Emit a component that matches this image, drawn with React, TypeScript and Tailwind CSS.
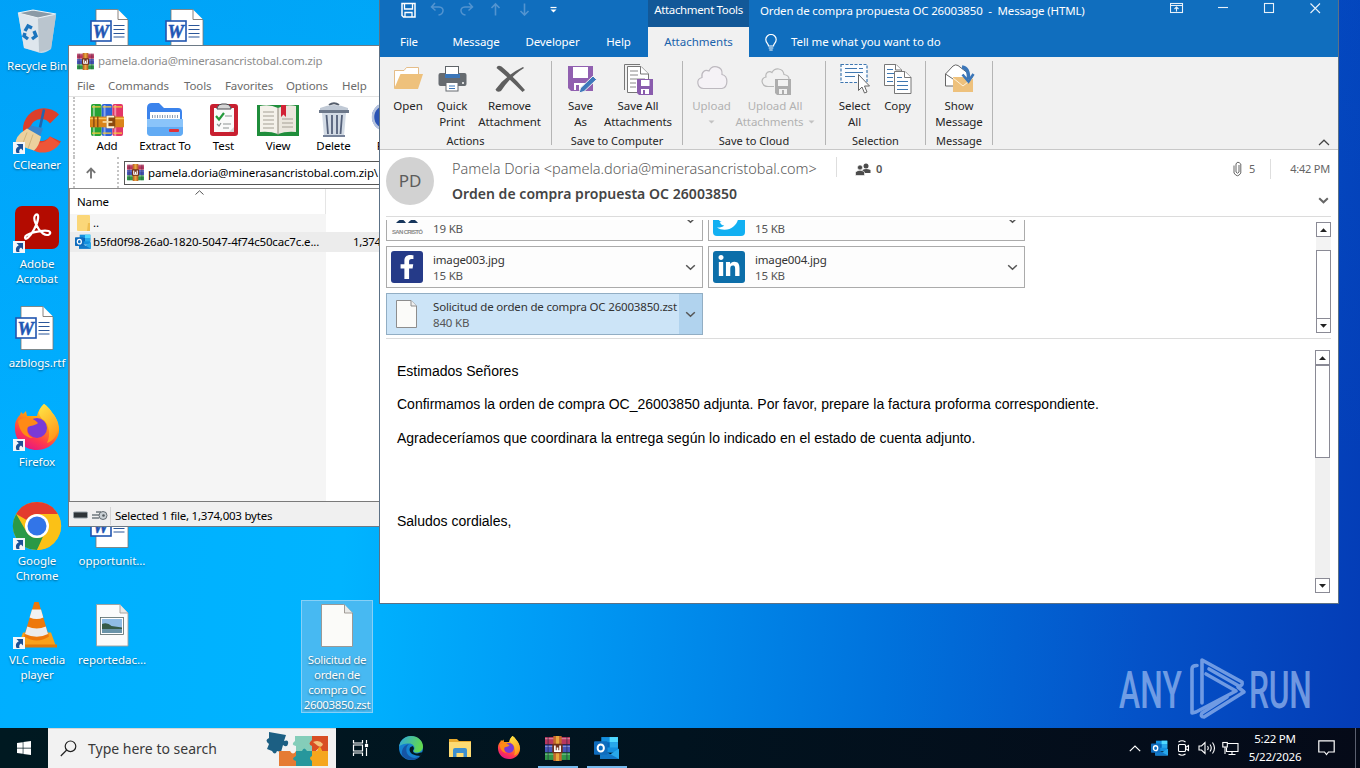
import React from 'react';
import { FaFacebookF, FaLinkedinIn, FaTwitter, FaWindows } from 'react-icons/fa';

/* ---------- Desktop icons ---------- */

function RecycleIcon() {
  return (
    <svg width="48" height="48" viewBox="0 0 48 48">
      <path d="M5 5 L43 7 L38 41 Q30 47 24 44 L11 40 Z" fill="#d5dde3" opacity="0.9" />
      <path d="M24 10 L43 7 L38 41 L26 44 Z" fill="#b9c3cb" opacity="0.9" />
      <path d="M5 5 L20 2 L43 6 L25 10 Z" fill="#8a9aa6" stroke="#eef3f6" strokeWidth="1.2" />
      <path d="M5 5 L25 10 L26 44 L11 40 Z" fill="#e3e9ed" opacity="0.85" />
      <g stroke="#1b74bd" strokeWidth="3.4" fill="none">
        <path d="M12 23 L15 18 L19 20" />
        <path d="M21 23 L23 28 L19 31" />
        <path d="M15 31 L11 28 L12 25" />
      </g>
    </svg>
  );
}

function WordDoc() {
  return (
    <svg width="48" height="48" viewBox="4.500 0 48 48">
      <path d="M12.500 1.500 H34 L44.500 12 V44.500 H12.500 Z" fill="#fff" stroke="#7c756f" strokeWidth="0.8" />
      <path d="M34.500 1.500 V11.500 H44.500" fill="#fff" stroke="#7c756f" strokeWidth="0.9" />
      <path d="M30 17.500 H41 M30 21.500 H41 M30 25.500 H41 M30 29 H41" stroke="#2b579a" strokeWidth="1.1" />
      <rect x="7.500" y="13" width="20" height="20" fill="#fff" stroke="#2155b0" strokeWidth="1.6" />
      <text x="17.300" y="29.500" fontSize="18.500" fontWeight="700" fontStyle="italic" textAnchor="middle" fill="#1f56b4" stroke="#1f56b4" strokeWidth="0.5" fontFamily="Liberation Serif">W</text>
    </svg>
  );
}

function BlankDoc() {
  return (
    <svg width="48" height="48" viewBox="0.500 0 48 48">
      <path d="M9 2.500 H31 L40 11 V44.500 H9 Z" fill="#fbfbf9" stroke="#98928c" strokeWidth="0.9" />
      <path d="M32 2.500 V11 H40" fill="#e9e9e7" stroke="#98928c" strokeWidth="0.9" />
    </svg>
  );
}

function PictureDoc() {
  return (
    <svg width="48" height="48" viewBox="0.500 0 48 48">
      <path d="M9 2.500 H32 L40.500 11 V44 H9 Z" fill="#fbfbfb" stroke="#a29d98" strokeWidth="0.9" />
      <path d="M32.500 2.500 V11 H40.500" fill="#e9e9e7" stroke="#a29d98" strokeWidth="0.9" />
      <rect x="13" y="15.500" width="23" height="17" fill="#fff" stroke="#566" strokeWidth="0.8" />
      <rect x="14.500" y="17" width="20" height="14" fill="#8fbbe4" />
      <path d="M14.500 22 Q20 20 24 24 L34.500 25.500 V27 H14.500 Z" fill="#355a48" />
      <path d="M14.500 27 H34.500 V31 H14.500 Z" fill="#6a93a8" />
    </svg>
  );
}

function CCleanerIcon() {
  return (
    <svg width="48" height="48" viewBox="0 1.500 48 48">
      <path d="M46 9 A21 21 0 1 0 48 36 L37 31 A11 11 0 1 1 37 18 Z" fill="#dc3f2a" />
      <path d="M47 38 A21 21 0 0 1 16 42 L20 36 Q31 40 37 31 Z" fill="#ee5538" />
      <path d="M31 4 L27 22" stroke="#2165ae" strokeWidth="2.600" />
      <path d="M18 20 L30 23 L27 31 L14 24 Z" fill="#3a84cb" />
      <path d="M14 23 L28 31 Q26 41 21 45 L3 39 Q1 31 14 23 Z" fill="#ecd19e" />
      <path d="M14 27 L9 40 M20 29 L15 43" stroke="#d2b47c" strokeWidth="1" />
    </svg>
  );
}

function AcrobatIcon() {
  return (
    <svg width="48" height="48" viewBox="0 2 48 48" className="overflow-visible">
      <rect x="2" y="2" width="44" height="43" rx="7" fill="#b30b00" />
      <path d="M22.500 11 C26.500 8 26 17 21 25.500 C17 33 12 37 12 33.500 C12 29.500 30 25.500 35.500 27 C40 29 35 33 30 29.500 C24 25 19 14 22.500 11 Z" fill="none" stroke="#fff" strokeWidth="2.200" strokeLinejoin="round" />
    </svg>
  );
}

function FirefoxIcon({ size }: { size: number }) {
  return (
    <svg width={size} height={size} viewBox="0 1 48 48">
      <defs>
        <linearGradient id="fx-body" x1="0.8" y1="0" x2="0.3" y2="1">
          <stop offset="0" stopColor="#fff44f" />
          <stop offset="0.4" stopColor="#ff980e" />
          <stop offset="0.75" stopColor="#ff3750" />
          <stop offset="1" stopColor="#e31587" />
        </linearGradient>
        <linearGradient id="fx-tail" x1="0" y1="0" x2="0.4" y2="1">
          <stop offset="0" stopColor="#ffe847" />
          <stop offset="1" stopColor="#ff9a1b" />
        </linearGradient>
      </defs>
      <path d="M31 1 C37 5 39 10 41 12 C46 19 48 28 44 35 C40 43 32 47 24 47 C11 47 1 37 2 23 C2 18 5 14 7 12 L8 9 L10 11 L13 8 L14 13 C18 13 21 13 24 13 C25 8 27 5 31 1 Z" fill="url(#fx-body)" />
      <path d="M31 1 C37 5 39 10 41 12 C46 19 47 28 42 34 C40 37 37 39 34 40 C38 32 36 22 31 17 C27 15 26 11 26 9 C27 5 29 3 31 1 Z" fill="url(#fx-tail)" />
      <circle cx="24" cy="25" r="10" fill="#7a3ad6" />
      <path d="M5 18 C10 13 20 14 25 20 C22 23 18 22 15 24 C13 28 15 33 20 35 C11 35 6 27 5 18 Z" fill="#ff8a16" />
    </svg>
  );
}

function ChromeIcon() {
  return (
    <svg width="48" height="48" viewBox="0 1 48 48" className="overflow-visible">
      <circle cx="24" cy="24" r="24" fill="#fbc116" />
      <path d="M24 0 A24 24 0 0 1 44.800 12 H24 A12 12 0 0 0 13.600 18 L3.200 12 A24 24 0 0 1 24 0 Z" fill="#e33b2e" />
      <path d="M3.200 12 L13.600 30 A12 12 0 0 0 30 34.500 L24 48 A24 24 0 0 1 3.200 12 Z" fill="#2a9946" />
      <path d="M34.400 30 L24 48 A24 24 0 0 0 44.800 12 H24 Z" fill="#fbc116" />
      <circle cx="24" cy="24" r="12" fill="#fff" />
      <circle cx="24" cy="24" r="9.500" fill="#3275e8" />
    </svg>
  );
}

function VlcIcon() {
  return (
    <svg width="48" height="48" viewBox="1 1.500 48 48">
      <path d="M11 32 L39 32 L44 46 H6 Z" fill="#f9a11b" />
      <path d="M6 44 H45 V47 H5 Z" fill="#e07a0a" />
      <path d="M22.500 1 H26.500 L37 36 Q25 44 12 36 Z" fill="#ee780a" />
      <path d="M20 9 H29 L31.300 17 Q25 20 17.600 17 Z" fill="#f2f2f2" />
      <path d="M15.300 26 Q25 30 33.800 26 L36 33.500 Q25 39 13 33.500 Z" fill="#ececec" />
    </svg>
  );
}

function ShortcutArrow() {
  return (
    <svg width="12" height="12" viewBox="0 0 12 12" className="absolute bottom-0.5 left-[13px]">
      <rect width="12" height="12" fill="#f3f6fa" />
      <path d="M3.500 2 H10 V8.500 L8 6.500 Q5.500 7.500 6.500 11 H3.500 Q1.500 6.500 5.800 4.200 Z" fill="#1d5196" />
    </svg>
  );
}

interface DesktopItemProps {
  icon: React.ReactNode;
  lines: string[];
  col: number;
  row: number;
  shortcut?: boolean;
  selected?: boolean;
}

function DesktopItem({ icon, lines, col, row, shortcut, selected }: DesktopItemProps) {
  return (
    <div
      style={{ left: col * 75, top: 6 + row * 99 }}
      className="absolute w-[74px] flex flex-col items-center"
    >
      <div className={`w-[72px] pt-0.5 pb-px ${selected ? 'bg-[#47b9f2] outline outline-1 -outline-offset-1 outline-[#86d0f7]' : ''}`}>
        <div className="relative -mx-px h-[49px] flex justify-center">
          {icon}
          {shortcut && <ShortcutArrow />}
        </div>
        <div className="mt-px flex flex-col items-center text-[11.5px] leading-[15px] tracking-[-0.005em] text-white whitespace-nowrap [text-shadow:0_1px_2px_rgba(0,0,0,0.5)]">
          {lines.map((line) => (
            <div key={line} className={selected ? 'tracking-[-0.03em]' : ''}>{line}</div>
          ))}
        </div>
      </div>
    </div>
  );
}

/* ---------- Shared small icons ---------- */

function RarIcon({ size }: { size: number }) {
  return (
    <svg width={size} height={size} viewBox="0 0 24 24">
      <rect x="0" y="1" width="24" height="7" fill="#b8375f" />
      <rect x="0" y="8.500" width="24" height="7" fill="#4655b8" />
      <rect x="0" y="16" width="24" height="7" fill="#2f9848" />
      <path d="M0 2.500 H24 M0 10 H24 M0 17.500 H24" stroke="#fff" strokeOpacity="0.35" strokeWidth="1" />
      <path d="M3 1 V23 M21 1 V23" stroke="#2a2140" strokeOpacity="0.5" strokeWidth="1.200" />
      <rect x="8" y="0" width="8" height="24" fill="#c4692a" />
      <rect x="10.500" y="0" width="3" height="24" fill="#e6a63d" />
      <rect x="7" y="7.500" width="10" height="9" rx="1" fill="#70301b" />
      <path d="M9.500 9 V14.500 H14.500 V9 M12 11 V14" stroke="#fff" strokeWidth="1.600" fill="none" />
    </svg>
  );
}

function OutlookIcon({ size }: { size: number }) {
  return (
    <svg width={size} height={size} viewBox="0 0 24 24" className="shrink-0">
      <rect x="7" y="1" width="16" height="15" fill="#1490df" />
      <rect x="15" y="1" width="8" height="5" fill="#50d9ff" />
      <rect x="15" y="6" width="8" height="5" fill="#28a8ea" />
      <rect x="7" y="6" width="8" height="5" fill="#0364b8" />
      <path d="M6 12 L15 18 L24 12 V22 H6 Z" fill="#28a8ea" />
      <path d="M6 12 L24 22 H6 Z" fill="#1278c8" />
      <rect x="0" y="5" width="13" height="13" rx="1" fill="#0f6cbd" />
      <ellipse cx="6.500" cy="11.500" rx="3" ry="3.400" fill="none" stroke="#fff" strokeWidth="1.900" />
    </svg>
  );
}

function Chevron({ className = '' }: { className?: string }) {
  return (
    <svg width="11" height="7" viewBox="0 0 11 7" className={className}>
      <path d="M1.200 1.200 L5.500 5.300 L9.800 1.200" fill="none" stroke="currentColor" strokeWidth="1.500" />
    </svg>
  );
}

/* ---------- WinRAR window ---------- */

function AddIcon() {
  return (
    <svg width="34" height="34" viewBox="0 0 35 35">
      <rect x="1" y="1" width="11" height="33" rx="2" fill="#27a335" />
      <rect x="12" y="1" width="11" height="33" rx="2" fill="#2d62d8" />
      <rect x="23" y="1" width="11" height="33" rx="2" fill="#e33668" />
      <path d="M4 2 V34 M15 2 V34 M26 2 V34" stroke="#fff" strokeOpacity="0.45" strokeWidth="2" />
      <path d="M2 4 H11 M13 4 H22 M24 4 H33 M2 31 H11 M13 31 H22 M24 31 H33" stroke="#f5c93c" strokeWidth="1.400" />
      <rect x="0" y="14" width="35" height="11" fill="#d9841a" />
      <path d="M0 16 H35" stroke="#f9c357" strokeWidth="1.500" />
      <path d="M4 14 V25 M8 14 V25" stroke="#8a4a10" strokeWidth="1.500" />
      <path d="M17 13 H26 V26 H17 Z" fill="#8a4a10" />
      <path d="M25 14 H18 V25 H25" fill="none" stroke="#fff2cf" strokeWidth="2" />
      <path d="M13 19.500 H23" stroke="#f7d9a0" strokeWidth="1.800" />
    </svg>
  );
}

function ExtractIcon() {
  return (
    <svg width="38" height="36" viewBox="0 0 38 36">
      <path d="M1 6 Q1 1 6 1 H13 L18 6 H32 Q36 6 36 10 V18 H1 Z" fill="#3b83ec" />
      <path d="M4 10 H34 V20 H4 Z" fill="#fff" />
      <path d="M6 14.500 H32" stroke="#8a9ab0" strokeWidth="3" strokeDasharray="1 1.500" />
      <path d="M1 17 H37 V30 Q37 34 33 34 H5 Q1 34 1 30 Z" fill="#8ac4fa" />
      <path d="M1 25 H37 V30 Q37 34 33 34 H5 Q1 34 1 30 Z" fill="#62abf4" />
      <rect x="23" y="27" width="10" height="3" rx="1" fill="#e0323a" />
    </svg>
  );
}

function TestIcon() {
  return (
    <svg width="30" height="36" viewBox="0 0 30 36">
      <rect x="1" y="2" width="28" height="32" rx="3" fill="#c81f30" />
      <rect x="5" y="6" width="20" height="24" fill="#fafafa" />
      <path d="M20 30 L25 25 V30 Z" fill="#d5d5d5" />
      <path d="M8 6 Q9 2 13 2 H17 Q21 2 22 6 V7 H8 Z" fill="#d6d6d6" stroke="#4a4a4e" strokeWidth="1" />
      <path d="M7 14 L10 17.500 L15 11" fill="none" stroke="#249a3c" strokeWidth="2.200" />
      <path d="M16 14 H23 M8 22 L10 24 L12 21 M14 22 H22 M14 26 H20" fill="none" stroke="#8d9494" strokeWidth="1.200" />
    </svg>
  );
}

function ViewIcon() {
  return (
    <svg width="44" height="36" viewBox="0 0 44 36">
      <path d="M1 3 H43 V34 H1 Z" fill="#1f8d3b" />
      <path d="M4 4 Q14 2 22 6 V32 Q14 29 4 30 Z" fill="#f4f1ea" />
      <path d="M40 4 Q30 2 22 6 V32 Q30 29 40 30 Z" fill="#ebe7de" />
      <path d="M21.500 6 H22.500 V33 H21.500 Z" fill="#8b8578" />
      <path d="M7 10 H18 M7 14 H18 M7 18 H18 M7 22 H18 M7 26 H18 M26 17 H37 M26 21 H37 M26 25 H37" stroke="#a5a095" />
      <path d="M25 3 H30 V15 L27.500 12.500 L25 15 Z" fill="#d22436" />
    </svg>
  );
}

function DeleteIcon() {
  return (
    <svg width="32" height="36" viewBox="0 0 32 36">
      <path d="M11 3 Q16 -0.500 21 3" fill="none" stroke="#555e6c" strokeWidth="2" />
      <path d="M2 6 Q16 0 30 6 V9 H2 Z" fill="#c0c9d5" />
      <path d="M1 8 H31 V11 H1 Z" fill="#6d788a" />
      <path d="M4 11 H28 L26 34 H6 Z" fill="#d2dae4" />
      <path d="M8.500 13 L10 32 M14 13 V32 M19 13 V32 M24 13 L22.500 32" stroke="#55617a" strokeWidth="1.800" />
      <path d="M5 33 H27 V35 H5 Z" fill="#77839a" />
    </svg>
  );
}

function FindIcon() {
  return (
    <svg width="36" height="36" viewBox="0 0 36 36">
      <circle cx="16" cy="15" r="14" fill="#2a53b4" />
      <circle cx="16" cy="15" r="13" fill="none" stroke="#b4c2dd" strokeWidth="2.500" />
    </svg>
  );
}

const rarTools = [
  { label: 'Add', icon: <AddIcon />, width: 'w-[50px]' },
  { label: 'Extract To', icon: <ExtractIcon />, width: 'w-[66px]' },
  { label: 'Test', icon: <TestIcon />, width: 'w-[51px]' },
  { label: 'View', icon: <ViewIcon />, width: 'w-[58px]' },
  { label: 'Delete', icon: <DeleteIcon />, width: 'w-[53px]' },
  { label: 'Find', icon: <FindIcon />, width: 'w-[56px]' },
];

const rarMenu = [
  { label: 'File', width: 'w-[31px]' },
  { label: 'Commands', width: 'w-[76px]' },
  { label: 'Tools', width: 'w-[41px]' },
  { label: 'Favorites', width: 'w-[61px]' },
  { label: 'Options', width: 'w-[56px]' },
  { label: 'Help', width: 'w-[30px]' },
];

function RarWindow() {
  return (
    <div className="absolute left-[68px] top-[45px] w-[352px] h-[482px] bg-white border border-[#6d7a86] flex flex-col overflow-hidden text-[11.5px] tracking-[-0.01em] whitespace-nowrap">
      <div className="h-[30px] flex items-center pl-2 gap-1 text-[#8d8d8d]">
        <RarIcon size={17} />
        <span className="tracking-[-0.013em]">pamela.doria@minerasancristobal.com.zip</span>
      </div>
      <div className="h-5 flex items-center pl-2 text-[#6b6b6b]">
        {rarMenu.map((m) => (
          <span key={m.label} className={m.width}>{m.label}</span>
        ))}
      </div>
      <div className="h-[61px] border-t border-[#e3e3e3] flex pl-1">
        <div className="w-[9px] shrink-0 border-l-2 border-dotted border-[#c4c4c4]" />
        <div className="flex shrink-0 text-black">
          {rarTools.map((t) => (
            <div key={t.label} className={`${t.width} shrink-0 flex flex-col items-center pt-[5px]`}>
              <div className="h-9 flex items-center">{t.icon}</div>
              <span className="leading-4">{t.label}</span>
            </div>
          ))}
        </div>
      </div>
      <div className="h-8 border-b border-[#8c8c8c] flex items-center pl-1">
        <div className="w-[44px] h-full border-l-2 border-dotted border-[#c4c4c4] flex items-center pl-[10px]">
          <svg width="12" height="12" viewBox="0 0 12 12">
            <path d="M6 11.500 V2 M1.800 5.800 L6 1.600 L10.200 5.800" fill="none" stroke="#757575" strokeWidth="1.900" />
          </svg>
        </div>
        <div className="w-[7px] h-full border-l-2 border-dotted border-[#c4c4c4]" />
        <div className="flex-1 h-6 border border-[#555] flex items-center pl-0.5 gap-1 text-black">
          <RarIcon size={17} />
          <span>pamela.doria@minerasancristobal.com.zip\</span>
        </div>
      </div>
      <div className="flex-1 flex relative">
        <div className="w-[257px] flex flex-col bg-[#f5f5f5] border-l border-[#8c8c8c]">
          <div className="h-[25px] pt-px bg-white border-r border-[#e5e5e5] flex items-center pl-[7px] text-black">Name</div>
          <div className="h-[18px] flex items-center pl-[7px] gap-[3px] text-black">
            <svg width="13" height="16" viewBox="0 0 13 16">
              <rect width="13" height="16" rx="1" fill="#fbd779" />
              <path d="M11 8 H13 V16 H10 Z" fill="#efbe51" />
            </svg>
            <span>..</span>
          </div>
          <div className="h-5 w-[330px] bg-[#ececec] flex items-center pl-[5px] text-black">
            <OutlookIcon size={16} />
            <span className="pl-[2px] w-[262px] shrink-0 tracking-[-0.014em]">b5fd0f98-26a0-1820-5047-4f74c50cac7c.e...</span>
            <span className="tracking-[-0.03em]">1,374,003</span>
          </div>
        </div>
        <svg width="9" height="5" viewBox="0 0 9 5" className="absolute left-[126px] top-px">
          <path d="M0.500 4.500 L4.500 0.800 L8.500 4.500" fill="none" stroke="#555" />
        </svg>
      </div>
      <div className="h-[25px] border-t border-[#7a7a7a] bg-[#f0f0f0] flex items-center pl-1 pt-[3px] text-black">
        <svg width="36" height="12" viewBox="0 0 36 12">
          <rect x="0.500" y="2" width="14" height="6" rx="1" fill="#2e3438" stroke="#98a2a8" />
          <path d="M19 5 H27 M19 8 H26 M23 2 H28" stroke="#6f787e" strokeWidth="1.500" />
          <circle cx="30" cy="5.500" r="4" fill="#c9d0d4" stroke="#646d73" />
          <circle cx="30.500" cy="5.500" r="1.300" fill="#545b60" />
        </svg>
        <div className="h-[18px] border-l border-[#d4d4d4] ml-px pl-1 leading-[18px] tracking-[-0.02em]">Selected 1 file, 1,374,003 bytes</div>
      </div>
    </div>
  );
}

/* ---------- Outlook ribbon icons ---------- */

function OpenIcon() {
  return (
    <svg width="32" height="32" viewBox="0 0 32 32">
      <path d="M2.500 26 V8.500 H12 L14.500 5.500 H26.500 V13" fill="#fff" stroke="#e2b57a" strokeWidth="0.900" />
      <path d="M8.500 12 H31 L26 27 H2 Z" fill="#eec17c" />
    </svg>
  );
}

function PrintIcon() {
  return (
    <svg width="32" height="32" viewBox="0 0 32 32">
      <rect x="2.500" y="11" width="28" height="13" rx="2" fill="#666b70" />
      <rect x="9.500" y="4.500" width="13" height="10" fill="#fff" stroke="#5f6468" />
      <path d="M9 12 H24 V16 H9 Z" fill="#3b76b8" />
      <rect x="10" y="20.500" width="12" height="8.500" fill="#fff" stroke="#666b70" />
      <path d="M13 24 H19 M13 26.500 H19" stroke="#3b76b8" />
      <circle cx="27" cy="21" r="1" fill="#fff" />
    </svg>
  );
}

function RemoveIcon() {
  return (
    <svg width="32" height="32" viewBox="0 0 32 32">
      <path d="M2.500 6 Q3.500 2.500 7.500 4.500 Q20 15 31 28 L28.500 30 Q16 17 2.500 6 Z" fill="#5f5f5f" />
      <path d="M30 6 Q17 14 7 29 Q3 31 1.500 27.500 Q12 13 29 5 Z" fill="#5f5f5f" />
    </svg>
  );
}

function SaveAsIcon() {
  return (
    <svg width="32" height="32" viewBox="0 0 32 32">
      <path d="M3 4 H28 V29 H6 L3 26 Z" fill="#9160b0" />
      <path d="M8 5 H23 V16 H8 Z" fill="#fff" />
      <path d="M9 21 H21 V28 H9 Z" fill="#fff" />
      <rect x="11" y="23" width="3" height="5" fill="#9160b0" />
      <path d="M14 31 L15.500 26 L28 14 L31.500 17.500 L19 29.500 Z" fill="#3d78bb" stroke="#f1f1f1" />
    </svg>
  );
}

function SaveAllIcon() {
  return (
    <svg width="32" height="32" viewBox="0 0 32 32">
      <path d="M2.500 28 V2.500 H18" fill="none" stroke="#777" />
      <path d="M5.500 30.500 V4.500 H19 L26.500 12 V30.500 Z" fill="#fff" stroke="#777" />
      <path d="M18.500 4.500 V12 H26.500" fill="#fff" stroke="#777" />
      <path d="M8 9 H16 M8 13 H16 M8 17 H23 M8 21 H14 M8 25 H14" stroke="#888" />
      <path d="M15 17 H31 V33 H17 L15 31 Z" fill="#8a5cad" />
      <rect x="19" y="18" width="8.500" height="6" fill="#fff" />
      <rect x="19" y="27" width="8" height="5" fill="#fff" />
      <rect x="21" y="28" width="2" height="4" fill="#8a5cad" />
    </svg>
  );
}

const cloudPath = 'M7.500 26.500 C1 26 -0.500 17 6 15.500 C5 10 9 7 13 9 C16 2 27 4 26 12.500 C32.500 14 32.500 25 26 26.500 Z';

function CloudIcon() {
  return (
    <svg width="32" height="32" viewBox="0 0 32 32">
      <path d={cloudPath} fill="#f5f2f6" stroke="#bdb9bf" strokeWidth="1.200" />
    </svg>
  );
}

function CloudSaveIcon() {
  return (
    <svg width="32" height="32" viewBox="-1 0 32 32">
      <path d="M14 24.500 H8 C1 24 0 16 6 15 C5 11 9 8 12 10.500 C15 5 23 6 24 12.500 C27 13 29 14.500 29 17" fill="none" stroke="#b8b8b8" strokeWidth="1.200" />
      <path d="M15 17 H31 V33 H17 L15 31 Z" fill="#adadad" />
      <rect x="18" y="18" width="10" height="6" fill="#f1f1f1" />
      <rect x="19" y="27" width="8" height="5" fill="#f1f1f1" />
      <rect x="22" y="28" width="2" height="4" fill="#adadad" />
    </svg>
  );
}

function SelectAllIcon() {
  return (
    <svg width="32" height="32" viewBox="0 0 32 32">
      <rect x="2" y="2.500" width="26" height="18" fill="#fafcff" stroke="#3f77b0" strokeWidth="1.200" strokeDasharray="3 1.500" />
      <path d="M6 6.500 H18 M20 6.500 H24 M6 10.500 H24 M6 14.500 H16" stroke="#3f77b0" strokeWidth="1.200" />
      <path d="M19.500 12.500 V28.500 L23 25 L25.500 31 L28 30 L25.500 24 H30.500 Z" fill="#fff" stroke="#666" />
    </svg>
  );
}

function CopyIcon() {
  return (
    <svg width="32" height="32" viewBox="1 0 32 32">
      <path d="M3.500 23.500 V2.500 H15 L20.500 8 V23.500 Z" fill="#fff" stroke="#777" />
      <path d="M14.500 2.500 V8 H20.500" fill="#fff" stroke="#777" />
      <path d="M6 7.500 H12 M6 11.500 H14 M6 15.500 H12 M6 19.500 H12" stroke="#3f77b0" />
      <path d="M13.500 31.500 V9.500 H24 L30 15.500 V31.500 Z" fill="#fff" stroke="#777" />
      <path d="M23.500 9.500 V15.500 H30" fill="#fff" stroke="#777" />
      <path d="M16 15.500 H21 M16 19.500 H27 M16 23.500 H27 M16 27.500 H27" stroke="#3f77b0" />
    </svg>
  );
}

function ShowMessageIcon() {
  return (
    <svg width="32" height="32" viewBox="0 0 32 32">
      <path d="M2.500 12 L10 4 Q12.500 2 15 3.500 L26 12 V24 H2.500 Z" fill="#fff" stroke="#666" />
      <path d="M2.500 12 L10 17" stroke="#666" />
      <rect x="10" y="15" width="20" height="15" fill="#eec17c" />
      <path d="M10 16 L20 24 L30 16" fill="none" stroke="#fff3dc" />
      <path d="M19 5 Q26 6 25.500 17" fill="none" stroke="#3b76b8" strokeWidth="3.500" />
      <path d="M19.500 12.500 L25.500 19.500 L30.500 12" fill="none" stroke="#3b76b8" strokeWidth="2.600" />
    </svg>
  );
}

interface RibbonButton {
  lines: string[];
  icon: React.ReactNode;
  width: string;
  disabled?: boolean;
  drop?: boolean;
}

const ribbon: { title: string; width: string; buttons: RibbonButton[] }[] = [
  {
    title: 'Actions',
    width: 'w-[172px]',
    buttons: [
      { lines: ['Open'], icon: <OpenIcon />, width: 'w-[44px]' },
      { lines: ['Quick', 'Print'], icon: <PrintIcon />, width: 'w-[44px]' },
      { lines: ['Remove', 'Attachment'], icon: <RemoveIcon />, width: 'w-[71px]' },
    ],
  },
  {
    title: 'Save to Computer',
    width: 'w-[131px]',
    buttons: [
      { lines: ['Save', 'As'], icon: <SaveAsIcon />, width: 'w-[42px]' },
      { lines: ['Save All', 'Attachments'], icon: <SaveAllIcon />, width: 'w-[73px]' },
    ],
  },
  {
    title: 'Save to Cloud',
    width: 'w-[143px]',
    buttons: [
      { lines: ['Upload', ''], icon: <CloudIcon />, width: 'w-[42px]', disabled: true, drop: true },
      { lines: ['Upload All', 'Attachments'], icon: <CloudSaveIcon />, width: 'w-[85px]', disabled: true, drop: true },
    ],
  },
  {
    title: 'Selection',
    width: 'w-[100px]',
    buttons: [
      { lines: ['Select', 'All'], icon: <SelectAllIcon />, width: 'w-[44px]' },
      { lines: ['Copy'], icon: <CopyIcon />, width: 'w-[42px]' },
    ],
  },
  {
    title: 'Message',
    width: 'w-[67px]',
    buttons: [{ lines: ['Show', 'Message'], icon: <ShowMessageIcon />, width: 'w-[60px]' }],
  },
];

const DropArrow = () => (
  <svg width="7" height="4" viewBox="0 0 7 4">
    <path d="M0.500 0.500 H6.500 L3.500 3.500 Z" fill="#c2c2c2" />
  </svg>
);

function Ribbon() {
  return (
    <div className="h-[93px] bg-[#f1f1f1] border-b border-[#c8c8c8] flex relative text-[11.5px] text-[#262626]">
      {ribbon.map((g) => (
        <div key={g.title} className={`${g.width} flex pt-1 pb-1`}>
          <div className="flex-1 flex flex-col items-center">
            <div className="flex h-[72px]">
              {g.buttons.map((b) => (
                <div key={b.lines[0]} className={`${b.width} flex flex-col items-center leading-4 whitespace-nowrap pt-px tracking-[-0.005em] ${b.disabled ? 'text-[#b1b1b1]' : ''}`}>
                  <div className="h-9 [&>svg]:overflow-visible">{b.icon}</div>
                  <div>{b.lines[0]}</div>
                  <div className="h-4 flex items-center gap-1">
                    {b.lines[1] && <span>{b.lines[1]}</span>}
                    {b.drop && <DropArrow />}
                  </div>
                </div>
              ))}
            </div>
            <div className="mt-[3px] text-[11px] leading-4 whitespace-nowrap">{g.title}</div>
          </div>
          <div className="w-px bg-[#b5b5b5]" />
        </div>
      ))}
      <svg width="12" height="7" viewBox="0 0 12 7" className="absolute right-[8px] bottom-[3px]">
        <path d="M1 6 L6 1.200 L11 6" fill="none" stroke="#444" strokeWidth="1.200" />
      </svg>
    </div>
  );
}

function TitleBar() {
  return (
    <div className="h-[57px] bg-[#106ebe] text-white text-[11.5px] whitespace-nowrap flex">
      <div className="w-[268px] flex flex-col">
        <div className="h-[27px] flex pt-0.5 pl-3.5 text-[#5394d0]">
          <div className="w-[29px] pl-[7px]">
            <svg width="15" height="16" viewBox="0 0 15 16">
              <path d="M1 1.500 H14 V15 H2.500 L1 13.500 Z" fill="none" stroke="#fff" strokeWidth="1.500" />
              <path d="M3.500 1.500 V7 H11.500 V1.500 M4 15 V10.500 H11 V15" fill="none" stroke="#fff" strokeWidth="1.300" />
            </svg>
          </div>
          <div className="w-[29px] pl-[7px]">
            <svg width="15" height="14" viewBox="0 0 15 14">
              <path d="M5 1 L1.500 5 L5.500 8.500 M1.500 5 H9 Q13.500 5.500 13 9 Q12.500 12.500 8.500 13" fill="none" stroke="currentColor" strokeWidth="1.500" />
            </svg>
          </div>
          <div className="w-[29px] pl-[7px]">
            <svg width="15" height="14" viewBox="0 0 15 14">
              <path d="M10 1 L13.500 5 L9.500 8.500 M13.500 5 H6 Q1.500 5.500 2 9 Q2.500 12.500 6.500 13" fill="none" stroke="currentColor" strokeWidth="1.500" />
            </svg>
          </div>
          <div className="w-[29px] pl-[9px]">
            <svg width="11" height="14" viewBox="0 0 11 14">
              <path d="M5.500 13.500 V2.500 M1.500 6 L5.500 2 L9.500 6" fill="none" stroke="currentColor" strokeWidth="1.600" />
            </svg>
          </div>
          <div className="w-[29px] pl-[9px]">
            <svg width="11" height="14" viewBox="0 0 11 14">
              <path d="M5.500 1.500 V12.500 M1.500 9 L5.500 13 L9.500 9" fill="none" stroke="currentColor" strokeWidth="1.600" />
            </svg>
          </div>
          <div className="pl-[11px] pt-0.5">
            <svg width="7" height="9" viewBox="0 0 7 9">
              <path d="M0.500 3.500 H6.500" stroke="#fff" strokeWidth="1.200" />
              <path d="M0.500 5.500 H6.500 L3.500 8.500 Z" fill="#fff" />
            </svg>
          </div>
        </div>
        <div className="h-[30px] flex items-center text-center tracking-[-0.01em]">
          <span className="w-[58px]">File</span>
          <span className="w-[76px]">Message</span>
          <span className="w-[77px]">Developer</span>
          <span className="w-[55px]">Help</span>
        </div>
      </div>
      <div className="w-[101px] flex flex-col text-center">
        <div className="h-[27px] bg-[#125898] leading-[20px] tracking-[-0.03em]">Attachment Tools</div>
        <div className="h-[30px] bg-[#f1f1f1] text-[#1a62ab] leading-[30px]">Attachments</div>
      </div>
      <div className="flex-1 flex flex-col">
        <div className="h-[27px] flex justify-between pl-[11px]">
          <span className="leading-[21px] whitespace-pre tracking-[-0.013em]">Orden de compra propuesta OC 26003850  -  Message (HTML)</span>
          <svg width="152" height="14" viewBox="0 0 152 14" className="mt-0.5 mr-[16px]">
            <g fill="none" stroke="#e9f1f9" strokeWidth="1.100">
              <rect x="0.500" y="1.500" width="12" height="9" />
              <path d="M0.500 3.500 H12.500 M6.500 9.500 V5 M4.500 7 L6.500 5 L8.500 7" />
              <path d="M48 5.500 H58" />
              <rect x="94.500" y="1.500" width="9" height="9" />
              <path d="M140.500 1.500 L150 11 M150 1.500 L140.500 11" />
            </g>
          </svg>
        </div>
        <div className="h-[30px] flex items-center pl-4">
          <svg width="12" height="17" viewBox="0 0 12 17">
            <path d="M3.500 12 C3.500 9.500 0.800 9 0.800 5.500 A5.200 5 0 0 1 11.200 5.500 C11.200 9 8.500 9.500 8.500 12 Z M3.700 14 H8.300 M4.300 16 H7.700" fill="none" stroke="#fff" strokeWidth="1.200" />
          </svg>
          <span className="pl-3.5 tracking-[-0.007em]">Tell me what you want to do</span>
        </div>
      </div>
    </div>
  );
}

/* ---------- Outlook message ---------- */

interface AttachmentProps {
  name?: string;
  size: string;
  icon: React.ReactNode;
  selected?: boolean;
}

function Attachment({ name, size, icon, selected }: AttachmentProps) {
  return (
    <div className={`h-[42px] w-[317px] flex border whitespace-nowrap ${selected ? 'bg-[#cce4f7] border-[#92aec4]' : 'bg-[#fdfdfd] border-[#ababab]'}`}>
      <div className="w-[42px] shrink-0 pl-1 flex items-center">{icon}</div>
      <div className="flex-1 min-w-0 pl-1 pt-[5px] text-[11.5px] leading-4 tracking-[-0.015em]">
        <div className="h-4 text-[#333]">{name}</div>
        <div className="text-[#555]">{size}</div>
      </div>
      <div className={`w-[23px] h-full shrink-0 flex items-center justify-center text-[#555] ${selected ? 'bg-[#b1d3ee]' : ''}`}>
        <Chevron />
      </div>
    </div>
  );
}

function ScrollButton({ down }: { down?: boolean }) {
  return (
    <div className="h-[15px] border border-[#8a8a95] bg-white flex items-center justify-center shrink-0">
      <svg width="7" height="4" viewBox="0 0 7 4" className={down ? 'rotate-180' : ''}>
        <path d="M0 4 L3.500 0.300 L7 4 Z" fill="#222" />
      </svg>
    </div>
  );
}

function MessageHeader() {
  return (
    <div className="h-[66px] flex pl-1.5 pr-2">
      <div className="w-12 h-12 mt-[7px] rounded-full bg-[#d2d2d2] text-[#5c5c5c] text-[17px] flex items-center justify-center">PD</div>
      <div className="pl-[18px] pt-[7px] w-[402px] whitespace-nowrap">
        <div className="text-[14.5px] leading-[22px] font-light text-[#5c5c5c]">Pamela Doria &lt;pamela.doria@minerasancristobal.com&gt;</div>
        <div className="text-[14px] leading-[29px] font-semibold tracking-[0.003em] text-[#444]">Orden de compra propuesta OC 26003850</div>
      </div>
      <div className="mt-[7px] h-5 border-l border-[#dedede] pl-[18px] pt-[4px] flex items-center gap-[5px] text-[11px] text-[#555] font-semibold">
        <svg width="16" height="13" viewBox="0 0 16 13">
          <g fill="#4c4c4c">
            <circle cx="11" cy="3" r="2.500" />
            <path d="M7.500 10 V7 Q11 4.800 15.500 7 V10 Z" />
            <circle cx="5" cy="4.500" r="2.500" stroke="#fff" strokeWidth="0.600" />
            <path d="M0.500 12.500 V9 Q5 5.500 9.500 9 V12.500 Z" stroke="#fff" strokeWidth="0.600" />
          </g>
        </svg>
        <span>0</span>
      </div>
      <div className="ml-auto pt-[7px] flex flex-col items-end">
        <div className="h-6 flex items-center text-[11px] text-[#666]">
          <svg width="9" height="16" viewBox="0 0 9 16" className="mr-[7px]">
            <path d="M6 4 V11 Q4.500 13.500 3 11 V3 Q4.500 -0.500 7.800 3 V12 Q4.500 17.500 1 12 V4.500" fill="none" stroke="#666" strokeWidth="1" />
          </svg>
          <span>5</span>
          <div className="h-5 border-l border-[#dedede] ml-[15px] w-[20px]" />
          <span className="tracking-[-0.02em]">4:42 PM</span>
        </div>
        <Chevron className="mt-[16px] mr-px text-[#666] [&>path]:stroke-2" />
      </div>
    </div>
  );
}

function AttachmentPane() {
  return (
    <div className="h-[123px] ml-1.5 mr-[7px] border-y border-[#dcdcdc] pt-[3px] flex">
      <div className="flex-1 overflow-hidden flex flex-col justify-end pb-[3px]">
        <div className="grid grid-cols-[317px_317px] gap-[5px]">
          <Attachment
            size="19 KB"
            icon={
              <svg width="33" height="33" viewBox="0 0 33 33">
                <path d="M5 19 Q11 12 15 19 Z M17 19 Q22 12 27 19 Z" fill="#17365c" />
                <text x="1" y="29.500" fontSize="6" fontWeight="700" textLength="31" fill="#8a8a8a" fontFamily="Liberation Sans">SAN CRISTÓ</text>
              </svg>
            }
          />
          <Attachment
            size="15 KB"
            icon={<div className="w-8 h-8 rounded-sm bg-[#12b0f2] text-white text-2xl flex items-center justify-center"><FaTwitter /></div>}
          />
          <Attachment
            name="image003.jpg"
            size="15 KB"
            icon={<div className="w-8 h-8 rounded-[3px] bg-[#253a88] text-white text-2xl flex items-center justify-center"><FaFacebookF /></div>}
          />
          <Attachment
            name="image004.jpg"
            size="15 KB"
            icon={<div className="w-8 h-8 rounded-[3px] bg-[#0c6ea9] text-white text-2xl flex items-center justify-center"><FaLinkedinIn /></div>}
          />
          <Attachment
            name="Solicitud de orden de compra OC 26003850.zst"
            size="840 KB"
            selected
            icon={
              <svg width="32" height="32" viewBox="0 0 32 32">
                <path d="M5.500 2.500 H20 L25.500 8 V29.500 H5.500 Z" fill="#fbfbf9" stroke="#8d8d8d" />
                <path d="M20 2.500 V8 H25.500" fill="#eee" stroke="#8d8d8d" />
              </svg>
            }
          />
        </div>
      </div>
      <div className="w-[15px] mt-0.5 mb-[5px] flex flex-col bg-[#f3f3f3]">
        <ScrollButton />
        <div className="mt-[13px] flex-1 border border-b-0 border-[#8a8a95] bg-white" />
        <ScrollButton down />
      </div>
    </div>
  );
}

function OutlookWindow() {
  return (
    <div className="absolute left-[379px] top-0 w-[960px] h-[604px] bg-white border-x border-b border-[#5c7186] flex flex-col">
      <TitleBar />
      <Ribbon />
      <MessageHeader />
      <AttachmentPane />
      <div className="flex-1 flex pt-[11px] pb-[10px] pr-2">
        <div className="flex-1 pl-[17px] pt-[13px] font-['Liberation_Sans',sans-serif] text-[14px] leading-[17px] text-black">
          <p className="mb-4">Estimados Señores</p>
          <p className="mb-[17px]">Confirmamos la orden de compra OC_26003850 adjunta. Por favor, prepare la factura proforma correspondiente.</p>
          <p className="mb-[66px]">Agradeceríamos que coordinara la entrega según lo indicado en el estado de cuenta adjunto.</p>
          <p>Saludos cordiales,</p>
        </div>
        <div className="w-[15px] bg-[#f0f0f0] flex flex-col">
          <ScrollButton />
          <div className="h-[93px] border border-[#8a8a95] bg-white" />
          <div className="flex-1" />
          <ScrollButton down />
        </div>
      </div>
    </div>
  );
}

/* ---------- Taskbar ---------- */

function PuzzleArt() {
  return (
    <svg width="64" height="36" viewBox="0 0 64 36">
      <path d="M3 1 L20 4 L18 10 Q23 8 22 13 Q21 17 17 14 L15 21 L11 20 Q9 25 6 20 L1 18 L3 13 Q-2 9 3 7 Z" fill="#1c5f83" />
      <path d="M29 5 H46 V20 H30 V15 Q24 14 29 10 Z" fill="#84cdb9" />
      <path d="M46 5 H62 V20 H56 Q53 15 50 20 H46 V15 Q41 13 46 9 Z" fill="#d84e24" />
      <path d="M13 20 H24 Q27 25 30 20 V35 H13 Z" fill="#e57b33" />
      <path d="M30 20 H36 Q38 15 41 20 H46 V35 H30 V30 Q24 28 30 25 Z" fill="#26979c" />
      <path d="M46 20 H51 Q54 12 56 20 H62 V35 H46 V30 Q42 27 46 25 Z" fill="#f5a61d" />
      <path d="M47 11 Q53 8 57 13 Q56 17 52 15 Z" fill="#f3c27c" />
    </svg>
  );
}

function EdgeIcon() {
  return (
    <svg width="26" height="26" viewBox="0 0 26 26">
      <defs>
        <linearGradient id="edge-top" x1="0" y1="0" x2="1" y2="0.3">
          <stop offset="0" stopColor="#2ea7e0" />
          <stop offset="1" stopColor="#62d84f" />
        </linearGradient>
      </defs>
      <circle cx="13" cy="13" r="12" fill="#1580cf" />
      <path d="M1 12 C2 5 7 1 13 1 C20 1 25 6 25 11.500 C25 16 21 18 17.500 17.500 C15 17 15.500 15.500 16.500 14 C17 11 14.500 8.500 11 8.500 C6 8.500 2 10 1 12 Z" fill="url(#edge-top)" />
      <path d="M11 9 C7 12 7 20 14 22.500 C17 23.500 20 22.500 22.500 21 C18 27 8 26 4 20 C3 15 6 10 11 9 Z" fill="#1555a5" />
      <path d="M14.500 11 Q17 13 15 15.500 Q14.500 18 19 18.500 L25 17 L22.500 21 Q18 21 14 19 Q10.500 16 12 12.500 Z" fill="#031821" />
    </svg>
  );
}

function FolderIcon() {
  return (
    <svg width="24" height="22" viewBox="0 0 24 22">
      <path d="M1 2 H9 L11 4 H23 V20 H1 Z" fill="#e8a92c" />
      <path d="M1 5 H23 V20 H1 Z" fill="#fddb73" />
      <path d="M5 20 V13 Q5 11 7 11 H17 Q19 11 19 13 V20 H15.500 V16 H8.500 V20 Z" fill="#3c8fd0" />
    </svg>
  );
}

const apps = [
  { name: 'edge', icon: <EdgeIcon />, width: 'w-[49px]' },
  { name: 'explorer', icon: <FolderIcon />, width: 'w-[49px]' },
  { name: 'firefox', icon: <FirefoxIcon size={24} />, width: 'w-[49px]' },
  { name: 'winrar', icon: <RarIcon size={25} />, width: 'w-[49px]', open: true },
  { name: 'outlook', icon: <OutlookIcon size={25} />, width: 'w-[49px]', open: true },
];

function Taskbar() {
  return (
    <div className="absolute left-0 bottom-0 w-full h-10 bg-linear-to-r from-[#001921] via-[#01131f] to-[#050a18] flex items-center text-white">
      <div className="w-12 flex justify-center text-base">
        <FaWindows />
      </div>
      <div className="w-[288px] h-10 bg-[#f2f2f2] border-t border-[#d5d5d5] flex items-center pl-3 text-[#3a3a3a]">
        <svg width="17" height="17" viewBox="0 0 17 17">
          <circle cx="10.500" cy="6.300" r="5.300" fill="none" stroke="#222" strokeWidth="1.200" />
          <path d="M6.700 10 L0.800 16" stroke="#222" strokeWidth="1.200" />
        </svg>
        <span className="pl-[11px] w-[189px] text-[14px] whitespace-nowrap">Type here to search</span>
        <PuzzleArt />
      </div>
      <div className="w-[50px] flex justify-center pr-0.5">
        <svg width="17" height="16" viewBox="0 0 17 16" fill="none" stroke="#fff" strokeWidth="1.200">
          <path d="M1.500 0 V3 H10.500 V0 M1.500 16 V13 H10.500 V16 M1.500 5 H10.500 V11 H1.500 Z M14.500 0 V3.500 M14.500 8 V16" />
          <rect x="13.500" y="4.500" width="2" height="2" fill="#fff" />
        </svg>
      </div>
      <div className="flex h-full">
        {apps.map((app) => (
          <div key={app.name} className={`${app.width} h-full flex flex-col items-center`}>
            <div className="flex-1 flex items-center pt-0.5">{app.icon}</div>
            <div className={`h-0.5 w-10 ${app.open ? 'bg-[#76b9ed]' : ''}`} />
          </div>
        ))}
      </div>
      <div className="ml-auto flex items-center h-full">
        <svg width="12" height="7" viewBox="0 0 12 7" className="mr-[10px]">
          <path d="M0.800 6.200 L6 1 L11.200 6.200" fill="none" stroke="#fff" strokeWidth="1.200" />
        </svg>
        <OutlookIcon size={17} />
        <svg width="14" height="16" viewBox="0 0 14 16" className="ml-[8px]" fill="none" stroke="#fff" strokeWidth="1.100">
          <rect x="2.500" y="4.500" width="7" height="7" rx="1" />
          <path d="M9.500 7.500 L12.500 5.500 V10.500 L9.500 8.500 M2.500 2 Q6 -0.500 9.500 2 M2.500 14 Q6 16.500 9.500 14" />
        </svg>
        <svg width="18" height="14" viewBox="0 0 18 14" className="ml-[8px]" fill="none" stroke="#fff" strokeWidth="1.100">
          <path d="M1 5 H3.500 L7 1.500 V12.500 L3.500 9 H1 Z M9.500 5 Q11 7 9.500 9 M12 3.500 Q14.500 7 12 10.500 M14.500 1.500 Q18.500 7 14.500 12.500" />
        </svg>
        <svg width="17" height="15" viewBox="0 0 17 15" className="ml-[6px]" fill="none" stroke="#fff" strokeWidth="1.100">
          <path d="M5.500 2.500 H16 V10.500 H4.500 V6.500 M10 10.500 V13.500 M6.500 13.500 H13.500" />
          <rect x="0.800" y="1.500" width="4.500" height="4.500" />
          <path d="M3 6 V13" />
        </svg>
        <div className="w-[72px] text-center text-[11.5px] leading-[18px] tracking-[-0.02em]">
          <div>5:22 PM</div>
          <div>5/22/2026</div>
        </div>
        <svg width="17" height="16" viewBox="0 0 17 16" className="ml-[7px]">
          <path d="M0.800 0.800 H16.200 V12 H10.500 L8.500 14.500 L6.500 12 H0.800 Z" fill="none" stroke="#fff" strokeWidth="1.200" />
        </svg>
        <div className="ml-5 mr-1 w-px h-full bg-[#5b6070]" />
      </div>
    </div>
  );
}

function Watermark() {
  return (
    <svg width="210" height="66" viewBox="0 0 210 66" className="absolute left-[1117px] top-[656px] opacity-65">
      <g fill="#a9c5f5" fontFamily="Roboto, sans-serif" fontSize="52" fontWeight="500">
        <text transform="translate(2 51.500) scale(0.61 1)" textLength="103">ANY</text>
        <text transform="translate(132 51.500) scale(0.61 1)" textLength="103">RUN</text>
      </g>
      <g fill="none" stroke="#a9c5f5" strokeWidth="3.600" strokeLinejoin="round" strokeLinecap="round">
        <path d="M80 9.500 Q75 9.500 75 13 V57 L79 56 L119 35 L89 18" />
        <path d="M85 47 V4 L125 26 Q126 30 122 30 L92 13" />
        <path d="M121 31 L127 36 L87 61 Q83 61 85 57 L110 41" />
      </g>
    </svg>
  );
}

export default function App() {
  return (
    <div className="relative w-[1360px] h-[768px] overflow-hidden font-['Noto_Sans',sans-serif] bg-[linear-gradient(180deg,rgba(0,96,208,0.16)_0%,rgba(0,96,208,0)_60%),linear-gradient(94deg,#00aeff_0%,#00b4ff_27%,#009bf5_42%,#0072dc_66%,#0452c8_84%,#043cb6_100%)]">
      <DesktopItem icon={<RecycleIcon />} lines={['Recycle Bin']} col={0} row={0} />
      <DesktopItem icon={<CCleanerIcon />} lines={['CCleaner']} col={0} row={1} shortcut />
      <DesktopItem icon={<AcrobatIcon />} lines={['Adobe', 'Acrobat']} col={0} row={2} shortcut />
      <DesktopItem icon={<WordDoc />} lines={['azblogs.rtf']} col={0} row={3} />
      <DesktopItem icon={<FirefoxIcon size={48} />} lines={['Firefox']} col={0} row={4} shortcut />
      <DesktopItem icon={<ChromeIcon />} lines={['Google', 'Chrome']} col={0} row={5} shortcut />
      <DesktopItem icon={<VlcIcon />} lines={['VLC media', 'player']} col={0} row={6} shortcut />
      <DesktopItem icon={<WordDoc />} lines={[]} col={1} row={0} />
      <DesktopItem icon={<WordDoc />} lines={[]} col={2} row={0} />
      <DesktopItem icon={<WordDoc />} lines={['opportunit...']} col={1} row={5} />
      <DesktopItem icon={<PictureDoc />} lines={['reportedac...']} col={1} row={6} />
      <DesktopItem icon={<BlankDoc />} lines={['Solicitud de', 'orden de', 'compra OC', '26003850.zst']} col={4} row={6} selected />
      <Watermark />
      <RarWindow />
      <OutlookWindow />
      <Taskbar />
    </div>
  );
}
